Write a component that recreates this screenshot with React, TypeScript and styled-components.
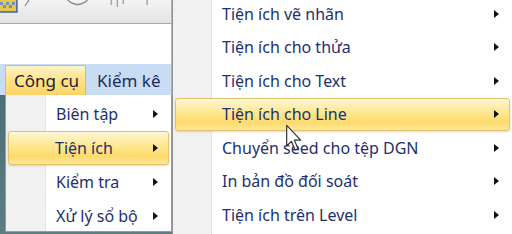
import React from "react";
import styled, { createGlobalStyle } from "styled-components";

const Global = createGlobalStyle`
  html, body { margin: 0; padding: 0; width: 512px; height: 234px; overflow: hidden; background: #e9e9e9; }
  #root { width: 512px; height: 234px; }
`;

const Screen = styled.div`
  position: relative;
  width: 512px;
  height: 234px;
  display: flex;
  overflow: hidden;
  font-family: "Noto Sans", "Open Sans", sans-serif;
  font-size: 16px;
`;

const LeftPane = styled.div`
  width: 172px;
  flex: none;
  display: flex;
  flex-direction: column;
  background: linear-gradient(#3b6670, #5e7d83);
`;

const Toolbar = styled.div`
  height: 23px;
  flex: none;
  background: linear-gradient(#f3f3f3, #e3e3e3);
  border-bottom: 1px solid #a9a9a9;
  border-right: 1px solid #b5b5b5;
  display: flex;
  align-items: flex-start;
`;

const Blank = styled.div`
  height: 40px;
  flex: none;
  background: #ffffff;
  border-right: 1px solid #b5b5b5;
`;

const MenuBar = styled.div`
  height: 31px;
  flex: none;
  background: #c8dcf4;
  display: flex;
  align-items: stretch;
  padding: 1px 0 0 5px;
  gap: 4px;
  box-sizing: border-box;
  border-right: 1px solid #b5b5b5;
  font-size: 17px;
`;

const BarItem = styled.div<{ $active?: boolean }>`
  display: flex;
  align-items: center;
  white-space: nowrap;
  padding: 0 ${(p) => (p.$active ? "8px" : "6px")};
  width: ${(p) => (p.$active ? "81px" : "auto")};
  box-sizing: border-box;
  color: ${(p) => (p.$active ? "#1b1b30" : "#1c2d5e")};
  border: 1px solid ${(p) => (p.$active ? "#e2b85a" : "transparent")};
  border-bottom: none;
  border-radius: 2px 2px 0 0;
  background: ${(p) =>
    p.$active
      ? "linear-gradient(#fff4cc 0%, #ffe48a 45%, #fdd466 100%)"
      : "transparent"};
`;

const Dropdown = styled.div`
  margin-left: 5px;
  height: 137px;
  flex: none;
  border: 1px solid #9a9a9a;
  border-top: none;
  background: linear-gradient(90deg, #f1f1f1 0, #f1f1f1 39px, #e2e3e3 39px, #e2e3e3 40px, #ffffff 40px);
  display: flex;
  flex-direction: column;
  padding-top: 2px;
  box-sizing: border-box;
`;

const MenuItem = styled.div<{ $hi?: boolean; $h: number; $indent: number; $arrowRight: number; $inset: number }>`
  height: ${(p) => p.$h}px;
  flex: none;
  display: flex;
  align-items: center;
  box-sizing: border-box;
  margin: 0 ${(p) => p.$inset}px;
  padding-left: ${(p) => p.$indent}px;
  padding-right: ${(p) => p.$arrowRight}px;
  color: #1d3070;
  border-radius: 3px;
  border: 1px solid ${(p) => (p.$hi ? "#e4c26c" : "transparent")};
  background: ${(p) =>
    p.$hi
      ? "linear-gradient(#fef6d6 0%, #fee995 40%, #fdda6c 75%, #fde79a 100%)"
      : "transparent"};
  box-shadow: ${(p) => (p.$hi ? "0 1px 2px rgba(180,150,80,0.35)" : "none")};
`;

const Label = styled.span`
  flex: 1;
  white-space: nowrap;
`;

const Arrow = styled.span`
  width: 0;
  height: 0;
  border-top: 4.5px solid transparent;
  border-bottom: 4.5px solid transparent;
  border-left: 5px solid #111;
`;

const Submenu = styled.div`
  flex: 1;
  border-left: 1px solid #8f8f8f;
  background: linear-gradient(90deg, #f1f1f1 0, #f1f1f1 38px, #e2e3e3 38px, #e2e3e3 39px, #ffffff 39px);
  display: flex;
  flex-direction: column;
  margin-top: -3px;
  height: 240px;
`;

const Cursor = styled.svg`
  position: absolute;
  left: 286px;
  top: 124px;
`;

const leftItems = ["Biên tập", "Tiện ích", "Kiểm tra", "Xử lý sổ bộ"];
const rightItems = [
  "Tiện ích vẽ nhãn",
  "Tiện ích cho thửa",
  "Tiện ích cho Text",
  "Tiện ích cho Line",
  "Chuyển seed cho tệp DGN",
  "In bản đồ đối soát",
  "Tiện ích trên Level",
];

export default function App() {
  return (
    <>
      <Global />
      <Screen>
        <LeftPane>
          <Toolbar>
            <svg width="172" height="20" viewBox="0 0 172 20">
              <rect x="-2" y="-2" width="19" height="14" fill="#e7c94a" stroke="#3a5fa8" strokeWidth="1.5" />
              <path d="M0 2h3v3h-3zM6 2h3v3h-3zM12 2h3v3h-3zM3 5h3v3h-3zM9 5h3v3h-3z" fill="#6f8fc9" />
              <path d="M25 6 L29 0" stroke="#8a8a8a" strokeWidth="1.2" />
              <path d="M68 0 Q78 9 88 0" stroke="#8a8a8a" strokeWidth="1.5" fill="none" />
              <path d="M112 0v5M118 0v7M124 0v4M148 0v5" stroke="#a6a6a6" strokeWidth="1.5" />
            </svg>
          </Toolbar>
          <Blank />
          <MenuBar>
            <BarItem $active>Công cụ</BarItem>
            <BarItem>Kiểm kê</BarItem>
          </MenuBar>
          <Dropdown>
            {leftItems.map((t, i) => (
              <MenuItem
                key={t}
                $hi={i === 1}
                $h={34}
                $inset={2}
                $indent={i === 1 ? 46 : 47}
                $arrowRight={10}
              >
                <Label>{t}</Label>
                <Arrow />
              </MenuItem>
            ))}
          </Dropdown>
        </LeftPane>
        <Submenu>
          {rightItems.map((t, i) => (
            <MenuItem
              key={t}
              $hi={i === 3}
              $h={33.5}
              $inset={2}
              $indent={46}
              $arrowRight={10}
            >
              <Label>{t}</Label>
              <Arrow />
            </MenuItem>
          ))}
        </Submenu>
        <Cursor width="16" height="28" viewBox="0 0 12 20">
          <path d="M0.5 0.5 L0.5 16 L4 12.5 L6.8 19 L9 18 L6.3 11.6 L11 11.6 Z" fill="#ffffff" stroke="#333" strokeWidth="0.9" strokeLinejoin="round" />
        </Cursor>
      </Screen>
    </>
  );
}
